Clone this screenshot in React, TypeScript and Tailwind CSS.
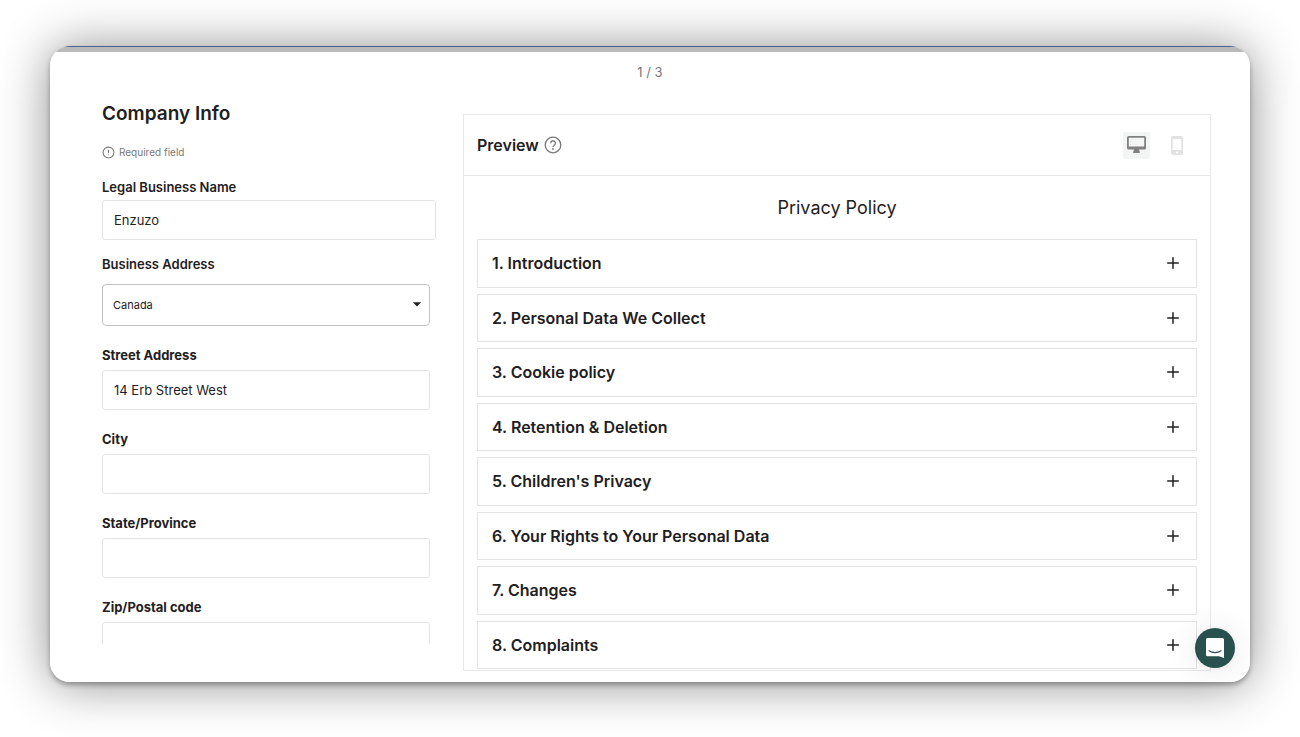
import React, { useState } from 'react';
import { CircleAlert, Plus } from 'lucide-react';
import { MdArrowDropDown } from 'react-icons/md';

const SECTIONS = [
  '1. Introduction',
  '2. Personal Data We Collect',
  '3. Cookie policy',
  '4. Retention & Deletion',
  "5. Children's Privacy",
  '6. Your Rights to Your Personal Data',
  '7. Changes',
  '8. Complaints',
];

const ADDRESS_FIELDS = [
  { id: 'street', label: 'Street Address', value: '14 Erb Street West' },
  { id: 'city', label: 'City', value: '' },
  { id: 'state', label: 'State/Province', value: '' },
  { id: 'zip', label: 'Zip/Postal code', value: '' },
];

const labelClass = 'block text-[13px] leading-5';
const inputClass =
  'block h-10 w-full rounded-[3px] border border-[#e4e4e4] bg-white px-[11px] text-[13px] outline-none focus:border-gray-400';

const HelpIcon: React.FC = () => (
  <svg viewBox="0 0 18 18" className="ml-[5px] h-[18px] w-[18px] text-[#777]" fill="none" stroke="currentColor" aria-hidden="true">
    <circle cx="9" cy="9" r="7.800" strokeWidth="1.300" />
    <path d="M6.600 7.200a2.400 2.400 0 1 1 3.700 2c-.9.600-1.300.9-1.300 1.900" strokeWidth="1.300" />
    <circle cx="9" cy="13" r=".9" fill="currentColor" stroke="none" />
  </svg>
);

const DesktopIcon: React.FC = () => (
  <svg viewBox="0 0 19 18" className="h-[18px] w-[19px]" fill="currentColor" aria-hidden="true">
    <path
      fillRule="evenodd"
      d="M1.500 0h16A1.500 1.500 0 0 1 19 1.500v10.500a1.500 1.500 0 0 1-1.500 1.500h-5.500l.8 2.500v1H6.200v-1L7 13.500H1.500A1.500 1.500 0 0 1 0 12V1.500A1.500 1.500 0 0 1 1.500 0ZM1.800 1.800v8.700h15.400V1.800Z"
    />
  </svg>
);

const PhoneIcon: React.FC = () => (
  <svg viewBox="0 0 12 19" className="h-[19px] w-[12px]" fill="currentColor" aria-hidden="true">
    <path
      fillRule="evenodd"
      d="M2 0h8a2 2 0 0 1 2 2v15a2 2 0 0 1-2 2H2a2 2 0 0 1-2-2V2a2 2 0 0 1 2-2ZM1.700 3v11h8.600V3ZM6 15.400a1.100 1.100 0 1 0 0 2.200a1.100 1.100 0 0 0 0-2.200Z"
    />
  </svg>
);

const CompanyForm: React.FC = () => (
  <form className="h-[552px] w-[334px] shrink-0 overflow-hidden pt-2">
    <h2 className="text-[19px] leading-7 font-semibold">Company Info</h2>
    <p className="mt-4 flex items-center gap-1 text-[10px] leading-4 text-[#777]">
      <CircleAlert className="h-[13px] w-[13px]" strokeWidth={2} aria-hidden="true" />
      Required field
    </p>

    <label htmlFor="business" className={`mt-[17px] font-semibold ${labelClass}`}>
      Legal Business Name
    </label>
    <input id="business" type="text" defaultValue="Enzuzo" className={`mt-[3px] ${inputClass}`} />

    <div className="pr-[6px]">
      <label htmlFor="country" className={`mt-[14px] font-semibold ${labelClass}`}>
        Business Address
      </label>
      <div className="relative mt-[10px]">
        <select
          id="country"
          defaultValue="Canada"
          className="block h-[42px] w-full appearance-none rounded-[4px] border border-[#c2c2c2] bg-white px-[10px] text-[11px] outline-none"
        >
          <option>Canada</option>
          <option>United States</option>
        </select>
        <MdArrowDropDown
          className="pointer-events-none absolute top-[10px] right-[3px] h-5 w-5"
          aria-hidden="true"
        />
      </div>

      {ADDRESS_FIELDS.map((field) => (
        <div key={field.id} className="mt-[19px]">
          <label htmlFor={field.id} className={`font-bold ${labelClass}`}>
            {field.label}
          </label>
          <input id={field.id} type="text" defaultValue={field.value} className={`mt-[5px] ${inputClass}`} />
        </div>
      ))}
    </div>
  </form>
);

const PolicyPreview: React.FC = () => {
  const [device, setDevice] = useState<'desktop' | 'mobile'>('desktop');

  const deviceClass = (active: boolean) =>
    `flex h-[27px] w-[27px] items-center justify-center rounded-[2px] ${
      active ? 'bg-[#f3f4f4] text-[#828080]' : 'text-[#e2e2e2]'
    }`;

  return (
    <section className="mt-[22px] mb-[11px] flex min-w-0 flex-1 flex-col border border-[#e8e8e8]">
      <header className="flex h-[61px] items-center border-b border-[#e8e8e8] pr-5 pl-[13px]">
        <h2 className="text-[16px] leading-6 font-semibold">Preview</h2>
        <HelpIcon />
        <div className="ml-auto flex gap-[13px]">
          <button
            type="button"
            aria-label="Desktop preview"
            onClick={() => setDevice('desktop')}
            className={deviceClass(device === 'desktop')}
          >
            <DesktopIcon />
          </button>
          <button
            type="button"
            aria-label="Mobile preview"
            onClick={() => setDevice('mobile')}
            className={deviceClass(device === 'mobile')}
          >
            <PhoneIcon />
          </button>
        </div>
      </header>

      <h3 className="pt-[18px] pb-[17px] text-center text-[18px] leading-7">Privacy Policy</h3>

      <ul className="mx-[13px] mb-px grid flex-1 auto-rows-fr gap-[6px]">
        {SECTIONS.map((section) => (
          <li key={section} className="flex">
            <button
              type="button"
              className="flex w-full items-center justify-between border border-[#e4e4e4] px-[14px] text-left text-[16px] leading-6 font-semibold"
            >
              {section}
              <Plus className="h-[18px] w-[18px]" strokeWidth={2} aria-hidden="true" />
            </button>
          </li>
        ))}
      </ul>
    </section>
  );
};

const ChatLauncher: React.FC = () => (
  <button
    type="button"
    aria-label="Open chat"
    className="absolute right-[15px] bottom-[14px] flex h-10 w-10 items-center justify-center rounded-full bg-[#27504f] shadow-[0_1px_6px_rgba(0,0,0,0.06),0_2px_32px_rgba(0,0,0,0.1)]"
  >
    <svg viewBox="0 0 18 20" className="h-5 w-[18px]" aria-hidden="true">
      <path
        d="M1.500 0h15A1.500 1.500 0 0 1 18 1.500V20l-5-1.800H1.500A1.500 1.500 0 0 1 0 16.700V1.500A1.500 1.500 0 0 1 1.500 0Z"
        fill="#fff"
      />
      <path d="M3 12.800c3.500 2.500 8.500 2.500 12 0" fill="none" stroke="#27504f" strokeWidth="1.200" strokeLinecap="round" />
    </svg>
  </button>
);

const App: React.FC = () => (
  <div className="flex min-h-screen flex-col bg-white px-[50px] pt-[46px] pb-[55px] font-['Inter','Liberation_Sans',sans-serif] text-[#1f2022]">
    <div className="relative flex flex-1 flex-col rounded-[20px] shadow-[0_2px_50px_rgba(0,0,0,0.45),0_3px_5px_rgba(0,0,0,0.3)]">
      <div className="flex flex-1 flex-col overflow-hidden rounded-[20px] bg-white">
        <div className="h-[6px] shrink-0 border-t border-[#4a628f] bg-[#bababa]" />
        <p className="text-center text-[13px] leading-10 text-[#777]">1 / 3</p>
        <main className="flex flex-1 gap-[27px] pr-[39px] pl-[52px]">
          <CompanyForm />
          <PolicyPreview />
        </main>
      </div>
      <ChatLauncher />
    </div>
  </div>
);

export default App;
